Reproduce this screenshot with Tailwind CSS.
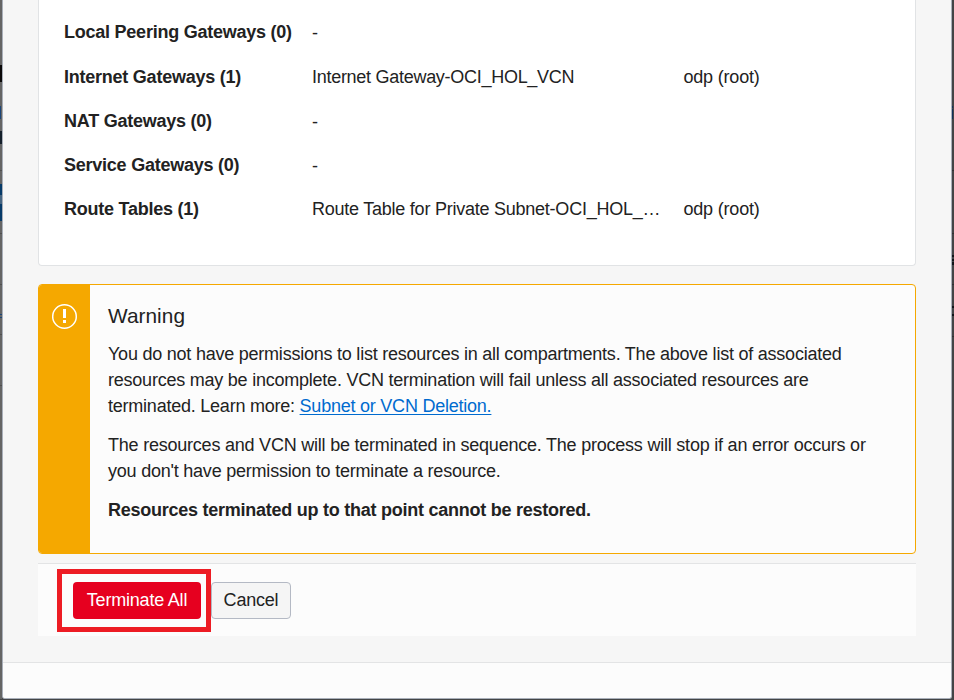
<!DOCTYPE html>
<html lang="en">
<head>
<meta charset="utf-8">
<title>Terminate VCN</title>
<script src="https://cdn.jsdelivr.net/npm/@tailwindcss/browser@4"></script>
</head>
<body class="w-[954px] h-[700px] overflow-hidden flex flex-col bg-[#434446] font-['Liberation_Sans',Arial,sans-serif] text-[18px] leading-[26px] text-[#222222]">
<div class="flex h-[699px]">
  <div class="w-[2px] shrink-0 bg-[#656565] flex flex-col">
    <div class="mt-[65px] h-[17px] bg-[#0b0909]"></div>
    <div class="mt-[24px] h-[13px] w-px bg-[#1b4578]"></div>
    <div class="mt-[12px] h-[13px] bg-[#15202b]"></div>
    <div class="mt-[26px] h-px bg-[#505050]"></div>
    <div class="mt-[13px] h-[11px] bg-[#073b69]"></div>
    <div class="h-[9px] bg-[#466582]"></div>
    <div class="h-[17px] bg-[#073b69]"></div>
    <div class="mt-[12px] h-px bg-[#505050]"></div>
    <div class="mt-[50px] h-px bg-[#505050]"></div>
    <div class="mt-[29px] h-px bg-[#1b4578]"></div>
    <div class="mt-[2px] h-px bg-[#1b4578]"></div>
    <div class="mt-[16px] h-px bg-[#505050]"></div>
    <div class="mt-[50px] h-px bg-[#505050]"></div>
  </div>
  <main class="w-[950px] shrink-0 border-x border-b border-[#a9afb9] rounded-b-[3px] overflow-hidden bg-[#f6f6f6] flex flex-col">
    <div class="h-[663px] px-[35px] border-b border-[#e3e4e5]">
      <section class="h-[266px] pl-[25px] pt-[10.35px] bg-white border-x border-b border-[#e1e3e5] rounded-b-[4px] whitespace-nowrap tracking-[-0.24px]">
        <div class="grid grid-cols-[248px_371.5px_1fr] auto-rows-[44.2px] leading-[44.2px]">
          <b>Local Peering Gateways (0)</b><span class="pt-px">-</span><span></span>
          <b>Internet Gateways (1)</b><span class="tracking-[-0.28px]">Internet Gateway-OCI_HOL_VCN</span><span class="tracking-[-0.2px]">odp (root)</span>
          <b>NAT Gateways (0)</b><span class="pt-px">-</span><span></span>
          <b>Service Gateways (0)</b><span class="pt-px">-</span><span></span>
          <b>Route Tables (1)</b><span>Route Table for Private Subnet-OCI_HOL_…</span><span class="tracking-[-0.2px]">odp (root)</span>
        </div>
      </section>
      <section class="mt-[18px] h-[270px] flex rounded-[4px] border border-[#f5a800] bg-[#fcfcfc] overflow-hidden">
        <div class="w-[51px] shrink-0 bg-[#f5a800] pl-[12px] pt-[18px]">
          <svg class="size-[27px]" viewBox="0 0 27 27" fill="none"><circle cx="13.5" cy="13.5" r="11.8" stroke="white" stroke-width="1.5"/><path d="M12 6h3v9h-3zM12 17h3v3h-3z" fill="white"/></svg>
        </div>
        <div class="pl-[18px] pt-[17px] whitespace-nowrap tracking-[-0.23px]">
          <h2 class="text-[20.8px] leading-[28px] tracking-[0.05px]">Warning</h2>
          <p class="mt-[11px]">You do not have permissions to list resources in all compartments. The above list of associated<br>resources may be incomplete. VCN termination will fail unless all associated resources are<br>terminated. Learn more: <a class="text-[#006bcf] underline decoration-1 underline-offset-2">Subnet or VCN Deletion.</a></p>
          <p class="mt-[13px] tracking-[-0.22px]">The resources and VCN will be terminated in sequence. The process will stop if an error occurs or<br>you don't have permission to terminate a resource.</p>
          <p class="mt-[13px] font-bold tracking-[-0.25px]">Resources terminated up to that point cannot be restored.</p>
        </div>
      </section>
      <footer class="mt-[9px] h-[73px] border-t border-[#e3e4e5] bg-[#fcfcfc] relative flex pl-[35px] pt-[18px] gap-[10px] tracking-[-0.2px]">
        <button class="w-[128px] h-[37px] rounded-[4px] bg-[#e6001f] text-white pb-px">Terminate All</button>
        <button class="w-[80px] h-[37px] rounded-[4px] border border-[#b4b9c4] bg-[#f5f5f5] pb-px">Cancel</button>
        <div class="absolute left-[19px] top-[5px] w-[154px] h-[63px] border-[5px] border-[#ed1c24]"></div>
      </footer>
    </div>
    <div class="flex-1 bg-[#fcfcfc]"></div>
  </main>
  <div class="w-[2px] shrink-0 flex flex-col">
    <div class="mt-[106px] h-[2px] w-px bg-[#12305a]"></div>
    <div class="mt-px h-[10px] w-px bg-[#12305a]"></div>
    <div class="mt-[51px] h-px bg-[#303133]"></div>
    <div class="mt-[62px] h-px bg-[#303133]"></div>
    <div class="mt-[21px] h-[2px] bg-[#101418]"></div>
    <div class="mt-[2px] h-[2px] bg-[#101418]"></div>
    <div class="mt-px h-[3px] bg-[#101418]"></div>
    <div class="mt-[19px] h-px bg-[#303133]"></div>
    <div class="mt-[21px] h-[2px] bg-[#101418]"></div>
    <div class="mt-[6px] h-[2px] bg-[#101418]"></div>
    <div class="mt-[20px] h-px bg-[#303133]"></div>
  </div>
</div>
</body>
</html>
